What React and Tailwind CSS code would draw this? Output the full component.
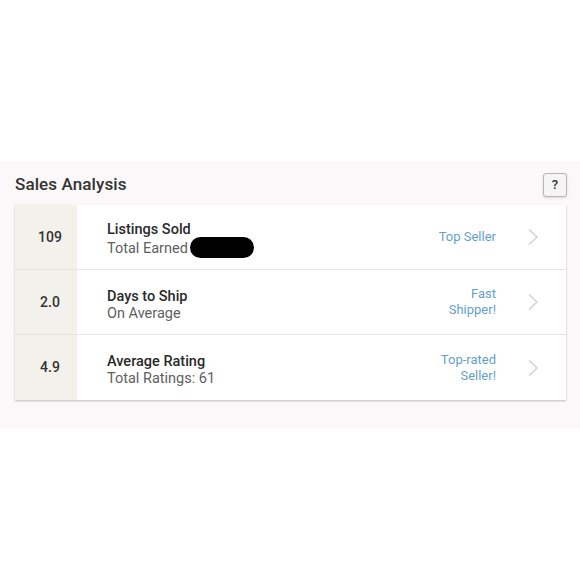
import React from 'react'

const rows = [
  { value: '109', title: 'Listings Sold', sub: 'Total Earned', redacted: true, badge: ['Top Seller'] },
  { value: '2.0', title: 'Days to Ship', sub: 'On Average', badge: ['Fast', 'Shipper!'] },
  { value: '4.9', title: 'Average Rating', sub: 'Total Ratings: 61', badge: ['Top-rated', 'Seller!'] },
]

function Chevron() {
  return (
    <svg width="12" height="18" viewBox="0 0 12 18" fill="none" stroke="#d2d2d2" strokeWidth="1.5">
      <path d="M2 1.5 L10 9 L2 16.5" />
    </svg>
  )
}

export default function App() {
  return (
    <div className="w-[580px] h-[580px] bg-white overflow-hidden" style={{ fontFamily: 'Roboto, "Noto Sans", sans-serif' }}>
      <div className="h-[161px]" />
      <div className="bg-[#faf8f8] px-[15px] pt-[8px] pb-[28px]">
        <div className="flex items-center justify-between h-[32px]">
          <h2 className="text-[17px] text-[#333] font-medium tracking-[0.1px]">Sales Analysis</h2>
          <button className="w-[24px] h-[24px] -mr-[2px] border border-[#b5b5b5] rounded-[3px] bg-[#f5f5f5] text-[13px] text-[#333] font-medium flex items-center justify-center shadow-sm">?</button>
        </div>
        <div className="mt-[4px] mr-[-1px] bg-white shadow-[0_1px_2px_rgba(0,0,0,0.25)]">
          {rows.map((r, i) => (
            <div key={r.value} className={`flex h-[65px] ${i < 2 ? 'border-b border-[#e4e4e4]' : ''}`}>
              <div className="w-[62px] bg-[#f3f1ec] flex items-center justify-center pl-[8px] text-[14px] font-medium text-[#333]">
                {r.value}
              </div>
              <div className="flex-1 flex items-center pl-[30px] pr-[27px]">
                <div className="flex-1 leading-[17px] text-[14.5px] pt-[5px]">
                  <div className="text-[#2a2a2a] font-medium">{r.title}</div>
                  <div className="text-[#606060] flex items-center">
                    {r.sub}
                    {r.redacted && <span className="inline-block w-[64px] h-[21px] rounded-full bg-black ml-[2px] -mt-[1px]" />}
                  </div>
                </div>
                <div className="text-right text-[13px] leading-[16px] text-[#649fcc] mr-[31px]">
                  {r.badge.map(b => <div key={b}>{b}</div>)}
                </div>
                <Chevron />
              </div>
            </div>
          ))}
        </div>
      </div>
    </div>
  )
}
